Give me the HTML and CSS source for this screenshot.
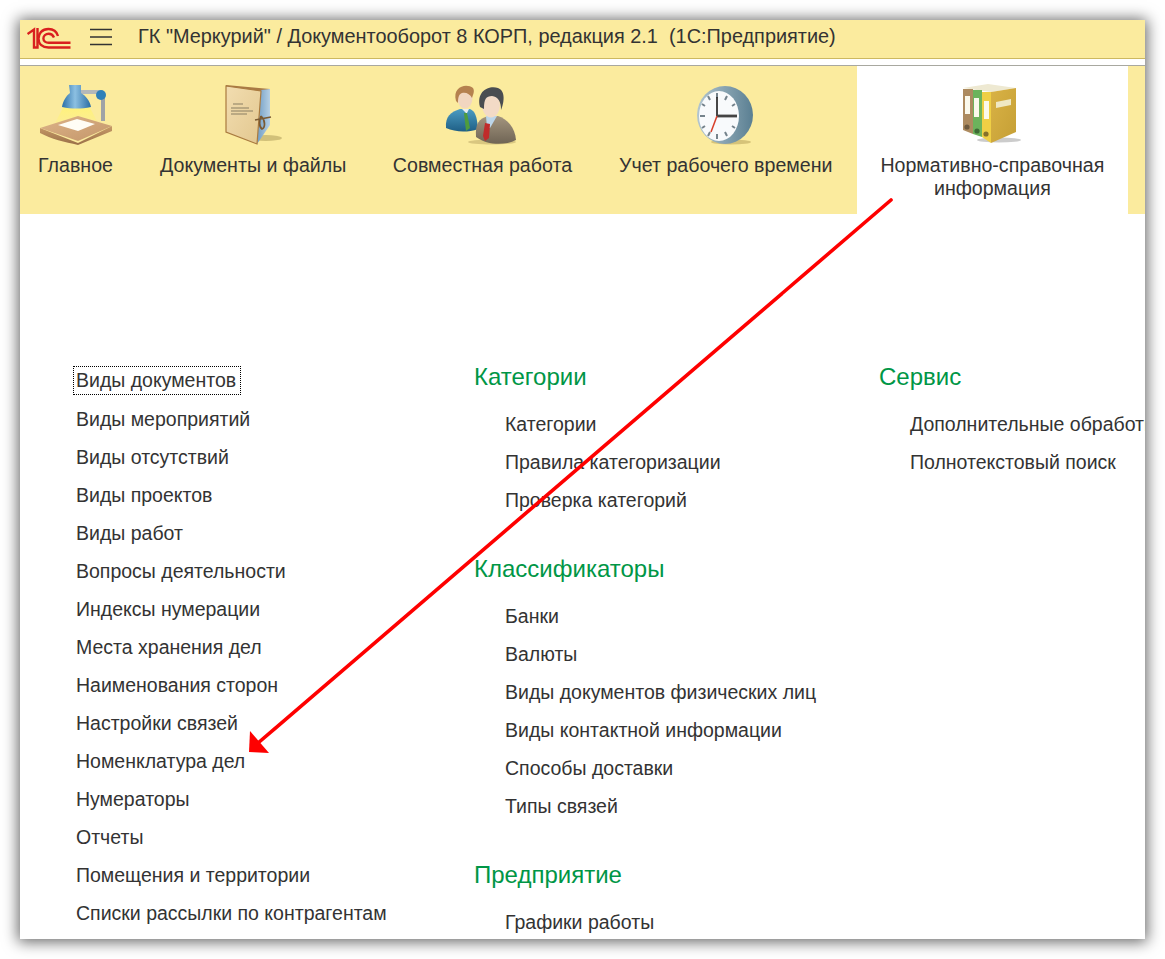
FILE: index.html
```html
<!DOCTYPE html>
<html lang="ru">
<head>
<meta charset="utf-8">
<title>Документооборот 8 КОРП</title>
<link rel="stylesheet" href="styles.css">
</head>
<body>
<div class="window">
  <header class="titlebar">
    <svg class="logo" width="44" height="22" viewBox="0 0 44 22" fill="none">
      <path d="M0.5 7 L7 2.5 V20.5 H10.5 V1" stroke="#d9201f" stroke-width="2.4"/>
      <path d="M31 9 C29.5 4 26 2 21.5 2 C15 2 11.5 6.5 11.5 11.5 C11.5 17 15.5 20.5 21.5 20.5 H43.5" stroke="#d9201f" stroke-width="2.4"/>
      <path d="M27 10.5 C26 8.3 24 6.8 21.7 6.8 C18.7 6.8 16.4 9 16.4 11.5 C16.4 14 18.8 15.8 21.7 15.8 H43.5" stroke="#d9201f" stroke-width="2.4"/>
    </svg>
    <svg class="burger" width="22" height="18" viewBox="0 0 22 18"><path d="M0 1.5H22M0 9H22M0 16.5H22" stroke="#333" stroke-width="1.3"/></svg>
    <span class="title">ГК "Меркурий" / Документооборот 8 КОРП, редакция 2.1  (1С:Предприятие)</span>
  </header>
  <div class="gap"></div>
  <nav class="tabs">
    <a class="tab first">
      <svg class="ico" width="78" height="66" viewBox="0 0 78 66">
        <defs>
          <linearGradient id="wood" x1="0" y1="0" x2="0" y2="1"><stop offset="0" stop-color="#c79a68"/><stop offset="1" stop-color="#9a7048"/></linearGradient>
          <linearGradient id="top" x1="0" y1="0" x2="1" y2="1"><stop offset="0" stop-color="#dcb388"/><stop offset="1" stop-color="#c4966a"/></linearGradient>
          <linearGradient id="lamp" x1="0" y1="0" x2="1" y2="0"><stop offset="0" stop-color="#2a6fa8"/><stop offset=".45" stop-color="#8cc0e2"/><stop offset="1" stop-color="#2a6ca3"/></linearGradient>
          <linearGradient id="cone" x1="0" y1="0" x2="0" y2="1"><stop offset="0" stop-color="#fff27a"/><stop offset="1" stop-color="#fff27a" stop-opacity=".2"/></linearGradient>
        </defs>
        <path d="M27 25 L17 44 L62 44 L52 25Z" fill="url(#cone)"/>
        <path d="M42 11 H62" stroke="#b4b8ba" stroke-width="4"/>
        <path d="M66 14 V40" stroke="#9fa3a6" stroke-width="4"/>
        <circle cx="64" cy="14" r="5" fill="#2f80b8"/>
        <path d="M3 47 L41 62 L75 45 V50 L41 64 C28 61 14 58 3 52Z" fill="url(#wood)"/>
        <path d="M3 47 L41 35 L75 45 L41 60Z" fill="url(#top)"/>
        <path d="M21 44 L40 38 L58 43 L41 50Z" fill="#fffdf5"/>
        <path d="M32 4 H44 L44 12 C49 15 53 20 54 26 C44 28 35 28 25 26 C26 20 29 15 33 12Z" fill="url(#lamp)"/>
      </svg>
      <span>Главное</span>
    </a>
    <a class="tab second">
      <svg class="ico" width="78" height="66" viewBox="3 0 78 66">
        <defs>
          <linearGradient id="paper" x1="0" y1="0" x2="1" y2="1"><stop offset="0" stop-color="#f2ddb0"/><stop offset="1" stop-color="#e2c78f"/></linearGradient>
          <linearGradient id="pages" x1="0" y1="0" x2="1" y2="0"><stop offset="0" stop-color="#6f9cc4"/><stop offset="1" stop-color="#b6d0e4"/></linearGradient>
        </defs>
        <ellipse cx="55" cy="57" rx="16" ry="3" fill="#bfae6a" opacity=".7"/>
        <path d="M15 4 L59 8 V11 L15 8Z" fill="#a97a45"/>
        <path d="M50 9 L59 8 V44 L46 63Z" fill="url(#pages)"/>
        <path d="M15 5 L50 10 L46 63 L15 51Z" fill="url(#paper)" stroke="#a97a3f" stroke-width="1.2"/>
        <path d="M22 23 H32 M20 27 H38 M20 30 H42 M20 33 H36" stroke="#8a7e63" stroke-width="1.1"/>
        <path d="M44 39 L60 36 M50 35 C55 40 54 47 51 48 C48 46 48 40 50 35" stroke="#7a5a32" stroke-width="1.7" fill="none"/>
      </svg>
      <span>Документы и файлы</span>
    </a>
    <a class="tab">
      <svg class="ico" width="78" height="66" viewBox="1 0 78 66">
        <defs>
          <linearGradient id="blue" x1="0" y1="0" x2="0" y2="1"><stop offset="0" stop-color="#4a9cc2"/><stop offset="1" stop-color="#1f5f86"/></linearGradient>
          <linearGradient id="suit" x1="0" y1="0" x2="0" y2="1"><stop offset="0" stop-color="#a3957f"/><stop offset="1" stop-color="#6f6454"/></linearGradient>
        </defs>
        <ellipse cx="50" cy="61" rx="24" ry="2.5" fill="#cbb873" opacity=".7"/>
        <path d="M4 47 C3 35 9 31 18 28 L28 28 C33 30 35 35 36 48 C25 52 13 51 4 47Z" fill="url(#blue)"/>
        <path d="M20 28 L27 28 L25 32 L24 32Z" fill="#e7eef2"/>
        <path d="M22 32 L25 32 L28 47 L24 50Z" fill="#4e9c3d"/>
        <ellipse cx="23" cy="17" rx="7.5" ry="10.5" fill="#f1d6c0"/>
        <path d="M14 20 C10 5 25 2 31 7 C33 10 31 14 30 17 C28 13 24 11 20 12 C17 13 16 16 16 22Z" fill="#b5814f"/>
        <path d="M34 56 C33 42 37 38 46 35 L56 35 C65 38 73 46 74 59 C62 65 45 64 34 56Z" fill="url(#suit)"/>
        <path d="M44 35 L55 35 L48 47 L45 47Z" fill="#bcd6ea"/>
        <path d="M43 42 L48 43 L47 57 L43 60 L41 55Z" fill="#c02b2b"/>
        <ellipse cx="49" cy="24" rx="9" ry="12.5" fill="#f3dac6"/>
        <path d="M38 26 C34 10 47 4 56 7 C64 10 62 22 59 29 C59 20 56 16 50 15 C44 15 42 18 42 28Z" fill="#4a4d51"/>
      </svg>
      <span>Совместная работа</span>
    </a>
    <a class="tab">
      <svg class="ico" width="78" height="66" viewBox="0 0 78 66">
        <defs>
          <linearGradient id="rim" x1="0" y1="0" x2="1" y2="0"><stop offset="0" stop-color="#b3c6d0"/><stop offset="1" stop-color="#5a7f92"/></linearGradient>
        </defs>
        <ellipse cx="44" cy="61" rx="20" ry="2.5" fill="#c9b56c" opacity=".75"/>
        <ellipse cx="38" cy="34" rx="28" ry="29" fill="url(#rim)"/>
        <ellipse cx="32" cy="35" rx="20" ry="25" fill="#f8fafc"/>
        <path d="M30 12V17M30 53V58M13 35H18M46 35H50M21 15l2 4M40 15l-2 4M15 23l3 2M48 23l-3 2M15 47l3-2M48 47l-3-2M21 55l2-4M40 55l-2-4" stroke="#75838c" stroke-width="2"/>
        <path d="M30 35V16" stroke="#333" stroke-width="1.8"/>
        <path d="M30 35H50" stroke="#444" stroke-width="2.8"/>
        <path d="M30 35L24 51" stroke="#d8402b" stroke-width="1.5"/>
      </svg>
      <span>Учет рабочего времени</span>
    </a>
    <a class="tab active">
      <svg class="ico" width="78" height="66" viewBox="2 0 78 66">
        <defs>
          <linearGradient id="yel" x1="0" y1="0" x2="1" y2="1"><stop offset="0" stop-color="#d9b245"/><stop offset="1" stop-color="#c59f35"/></linearGradient>
        </defs>
        <ellipse cx="48" cy="59" rx="22" ry="2.5" fill="#aaa" opacity=".6"/>
        <path d="M12 7 L37 3 L65 7 L40 11 Z" fill="#eee9d2"/>
        <path d="M12 8 H22 V53 L12 49Z" fill="#ad8b60"/>
        <path d="M22 9 H31 V56 L22 53Z" fill="#6cb35c"/>
        <path d="M31 11 H40 V62 L31 56Z" fill="#efcf45"/>
        <path d="M40 11 L65 7 V51 L40 62Z" fill="url(#yel)"/>
        <path d="M14 15H19V33H14ZM23 17H28V36H23ZM33 20H38V38H33Z" fill="#fbf9ec"/>
        <path d="M45 21 L60 18 V24 L45 27Z" fill="#efe8c4"/>
        <circle cx="16" cy="46" r="2.6" fill="#6d5a3f"/><circle cx="26" cy="50" r="2.6" fill="#3e6c36"/><circle cx="35" cy="53" r="2.6" fill="#86702a"/>
      </svg>
      <span>Нормативно-справочная<br>информация</span>
    </a>
  </nav>
  <main class="content">
    <section class="col col-a">
      <a class="item focused">Виды документов</a>
      <a class="item">Виды мероприятий</a>
      <a class="item">Виды отсутствий</a>
      <a class="item">Виды проектов</a>
      <a class="item">Виды работ</a>
      <a class="item">Вопросы деятельности</a>
      <a class="item">Индексы нумерации</a>
      <a class="item">Места хранения дел</a>
      <a class="item">Наименования сторон</a>
      <a class="item">Настройки связей</a>
      <a class="item">Номенклатура дел</a>
      <a class="item">Нумераторы</a>
      <a class="item">Отчеты</a>
      <a class="item">Помещения и территории</a>
      <a class="item">Списки рассылки по контрагентам</a>
    </section>
    <section class="col col-b">
      <h2 class="head">Категории</h2>
      <a class="item sub">Категории</a>
      <a class="item sub">Правила категоризации</a>
      <a class="item sub">Проверка категорий</a>
      <h2 class="head">Классификаторы</h2>
      <a class="item sub">Банки</a>
      <a class="item sub">Валюты</a>
      <a class="item sub">Виды документов физических лиц</a>
      <a class="item sub">Виды контактной информации</a>
      <a class="item sub">Способы доставки</a>
      <a class="item sub">Типы связей</a>
      <h2 class="head">Предприятие</h2>
      <a class="item sub">Графики работы</a>
    </section>
    <section class="col col-c">
      <h2 class="head">Сервис</h2>
      <a class="item sub">Дополнительные обработки</a>
      <a class="item sub">Полнотекстовый поиск</a>
    </section>
  </main>
  <svg class="arrow" width="670" height="570" viewBox="0 0 670 570">
    <path d="M651 2 L18 545" stroke="#fe0000" stroke-width="3.6" stroke-linecap="round" fill="none"/>
    <path d="M9 554 L10 533 L29 555Z" fill="#fe0000"/>
  </svg>
</div>
</body>
</html>
```

FILE: styles.css
```css
* { box-sizing: border-box; }
html, body { margin: 0; height: 100%; background: #fff; overflow: hidden; }
body { padding: 20px; font-family: "Liberation Sans", Arial, sans-serif; color: #333; }
.window {
  position: relative;
  width: 1125px;
  height: 919px;
  overflow: hidden;
  background: #fff;
}
html::before {
  content: "";
  position: fixed;
  left: 20px; top: 20px;
  width: 1125px; height: 919px;
  box-shadow: 0 1px 14px 2px rgba(0,0,0,.6);
}
.titlebar {
  height: 39px;
  background: #fbeb9e;
  border-bottom: 1px solid #cdb961;
  display: flex;
  align-items: center;
  padding: 0 0 0 7px;
  white-space: pre;
}
.logo { margin-top: -3px; flex: none; }
.burger { margin-left: 19px; margin-top: -5px; flex: none; }
.title { margin-left: 26px; font-size: 19.9px; margin-top: -5px; }
.gap { height: 6px; background: #fff; }
.tabs {
  height: 149px;
  background: #fbeb9e;
  border-top: 1px solid #a8a8a0;
  display: flex;
}
.tab {
  display: flex;
  flex-direction: column;
  align-items: center;
  text-align: center;
  padding: 15px 23.5px 0;
  font-size: 19.6px;
  line-height: 23px;
  white-space: nowrap;
}
.tab.first { padding-left: 16.5px; padding-right: 23px; }
.tab.second { padding-left: 22.5px; padding-right: 23px; }
.tab.active { background: #fff; padding: 15px 24px 0 23.5px; margin-left: 1px; }
.ico { height: 66px; margin-bottom: 7px; flex: none; }
.content {
  display: flex;
  padding-top: 148px;
}
.col { display: flex; flex-direction: column; flex: none; }
.col-a { width: 398px; padding-left: 56px; padding-top: 4px; }
.col-b { width: 405px; padding-left: 56px; padding-top: 1px; }
.col-c { width: 260px; padding-left: 56px; padding-top: 1px; }
.item {
  display: block;
  height: 38px;
  line-height: 38px;
  font-size: 19.5px;
  white-space: nowrap;
  color: #333;
}
.item.focused {
  width: 168px;
  height: 29px;
  line-height: 29px;
  margin: 0 0 5px -3px;
  padding-left: 3px;
  outline: 1px dotted #000;
  outline-offset: -1px;
}
.sub { padding-left: 31px; }
.head {
  margin: 36px 0 14px;
  font-size: 24px;
  font-weight: 400;
  line-height: 28px;
  color: #009646;
}
.head:first-child { margin-top: 0; }
.arrow {
  position: absolute;
  left: 220px;
  top: 178px;
}
```
